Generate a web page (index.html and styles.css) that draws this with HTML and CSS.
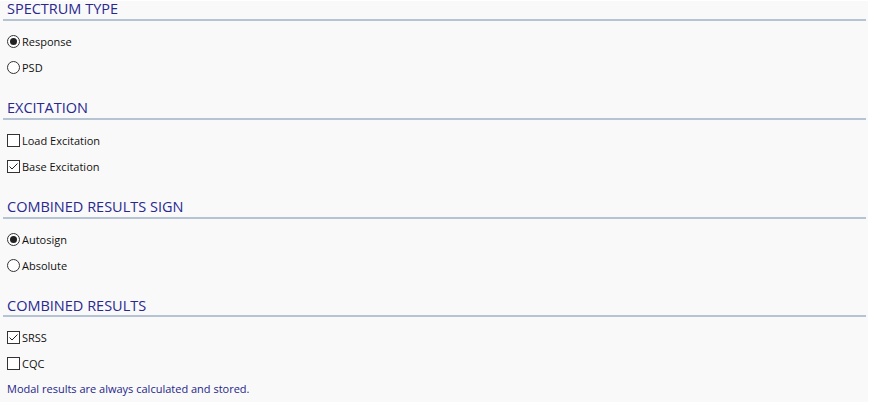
FILE: index.html
```html
<!DOCTYPE html>
<html>
<head>
<meta charset="utf-8">
<link rel="stylesheet" href="styles.css">
</head>
<body>
<div class="panel">
  <section class="group">
    <h2 class="title">SPECTRUM TYPE</h2>
    <div class="opts">
      <label class="opt"><span class="radio on"></span>Response</label>
      <label class="opt"><span class="radio"></span>PSD</label>
    </div>
  </section>
  <section class="group">
    <h2 class="title">EXCITATION</h2>
    <div class="opts">
      <label class="opt"><span class="check"></span>Load Excitation</label>
      <label class="opt"><span class="check on"><svg viewBox="0 0 11 11" width="11" height="11"><path d="M1.5 5.5 L4 8 L9.5 2.5" fill="none" stroke="#222" stroke-width="1"/></svg></span>Base Excitation</label>
    </div>
  </section>
  <section class="group">
    <h2 class="title">COMBINED RESULTS SIGN</h2>
    <div class="opts">
      <label class="opt"><span class="radio on"></span>Autosign</label>
      <label class="opt"><span class="radio"></span>Absolute</label>
    </div>
  </section>
  <section class="group last">
    <h2 class="title">COMBINED RESULTS</h2>
    <div class="opts">
      <label class="opt"><span class="check on"><svg viewBox="0 0 11 11" width="11" height="11"><path d="M1.5 5.5 L4 8 L9.5 2.5" fill="none" stroke="#222" stroke-width="1"/></svg></span>SRSS</label>
      <label class="opt"><span class="check"></span>CQC</label>
      <p class="note">Modal results are always calculated and stored.</p>
    </div>
  </section>
</div>
</body>
</html>
```
FILE: styles.css
```css
html, body { margin: 0; padding: 0; }
body {
  background: #ffffff;
  font-family: "Open Sans", "Noto Sans", sans-serif;
  width: 870px;
  height: 402px;
  overflow: hidden;
}
.panel {
  background: #f9f9f9;
  margin: 1px 2px 0 0;
  height: 401px;
  padding-left: 3px;
  padding-right: 2px;
  box-sizing: border-box;
}
.group {
  display: flex;
  flex-direction: column;
  height: 99px;
  box-sizing: border-box;
}
.title {
  margin: 0;
  font-weight: normal;
  font-size: 14.5px;
  line-height: 16px;
  color: #28288f;
  padding: 0 0 1px 4px;
  border-bottom: 2px solid #b6c3d3;
  height: 17px;
}
.opts { display: flex; flex-direction: column; padding-top: 7px; }
.opt {
  display: flex;
  align-items: center;
  height: 26px;
  font-size: 11px;
  color: #111;
  padding-left: 4px;
}
.radio {
  width: 11px; height: 11px;
  border: 1px solid #333;
  border-radius: 50%;
  margin-right: 2px;
  position: relative;
  background: #fff;
}
.radio.on::after {
  content: "";
  position: absolute;
  left: 2px; top: 2px;
  width: 7px; height: 7px;
  border-radius: 50%;
  background: #222;
}
.check {
  width: 11px; height: 11px;
  border: 1px solid #333;
  margin-right: 2px;
  background: #fff;
  display: flex; align-items: center; justify-content: center;
}
.check svg { width: 11px; height: 11px; display: block; }
.note {
  margin: 0;
  padding-left: 4px;
  font-size: 11px;
  height: 26px;
  line-height: 26px;
  color: #1f1f8a;
}
```
